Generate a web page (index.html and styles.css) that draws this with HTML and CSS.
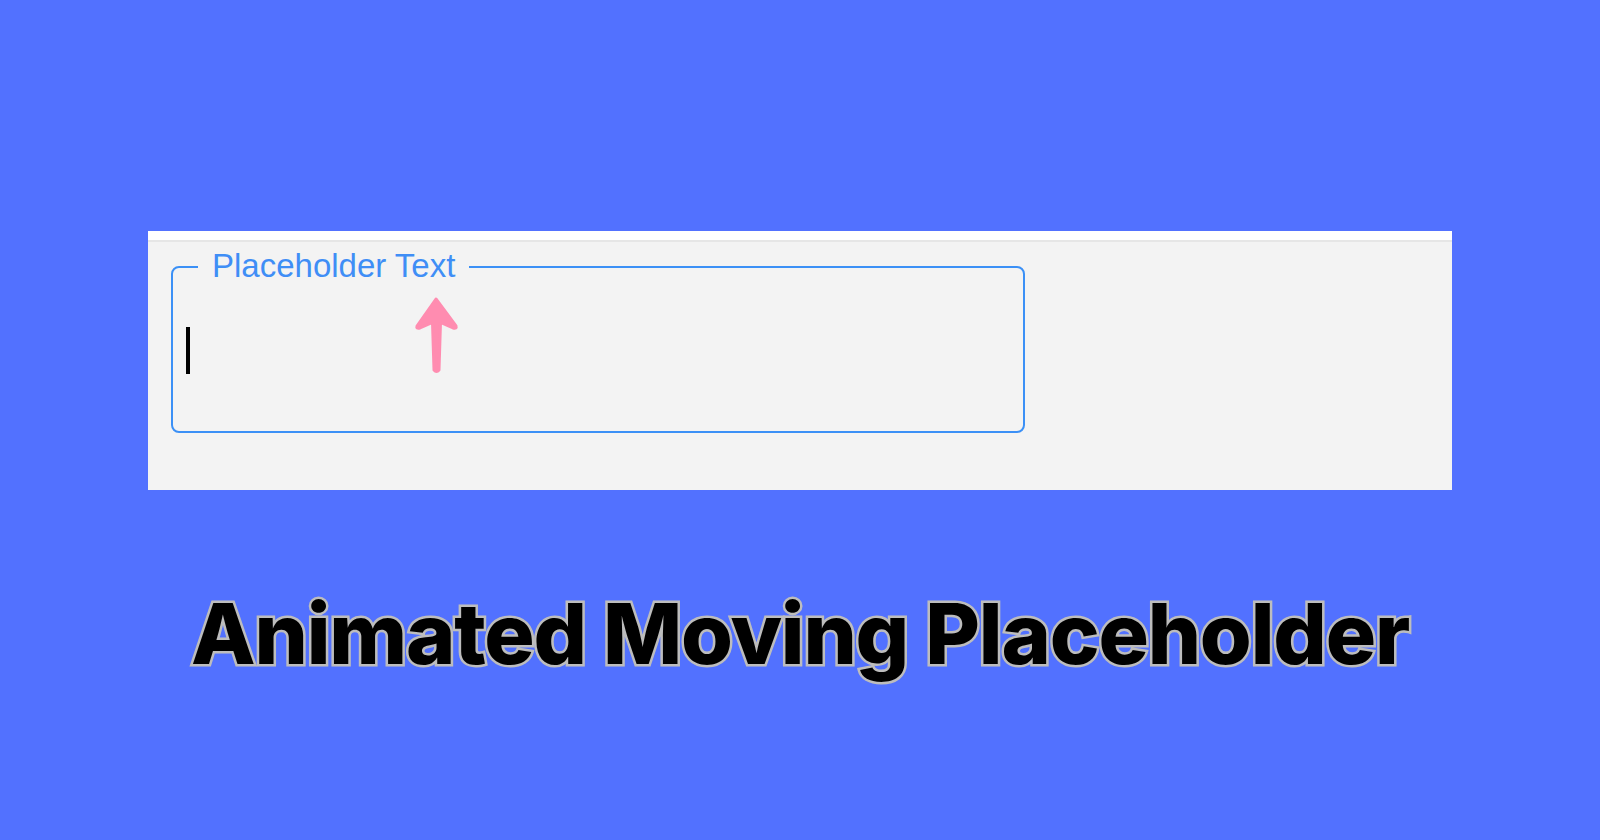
FILE: index.html
```html
<!DOCTYPE html>
<html lang="en">
<head>
<meta charset="utf-8">
<title>Animated Moving Placeholder</title>
<link rel="stylesheet" href="styles.css">
</head>
<body>
<main class="page">
  <section class="panel">
    <div class="panel-body">
      <div class="field">
        <span class="field-label">Placeholder Text</span>
        <span class="caret"></span>
        <svg class="arrow" width="46" height="80" viewBox="0 0 46 80" aria-hidden="true">
          <path d="M22 3 L3 30 Q2 33 6 32 L18.5 26.5 L20 74 Q22.5 77 25 74 L26.5 26.5 L39 32 Q43 33 42 30 Z" fill="#ff8cb0" stroke="#ff8cb0" stroke-width="3" stroke-linejoin="round" stroke-linecap="round"/>
        </svg>
      </div>
    </div>
  </section>
  <h1 class="title">Animated Moving Placeholder</h1>
</main>
</body>
</html>
```

FILE: styles.css
```css
html, body {
  margin: 0;
  padding: 0;
}
body {
  background: #5271ff;
  width: 1600px;
  height: 840px;
  overflow: hidden;
  font-family: "Liberation Sans", Arial, sans-serif;
}
.page {
  padding-top: 231px;
  display: flex;
  flex-direction: column;
  align-items: center;
}
.panel {
  width: 1304px;
  height: 259px;
  background: #f3f3f3;
  border-top: 9px solid #ffffff;
  box-sizing: border-box;
}
.panel-body {
  border-top: 2px solid #e6e6e6;
  padding: 24px 0 0 23px;
}
.field {
  position: relative;
  width: 854px;
  height: 167px;
  box-sizing: border-box;
  border: 2px solid #3b90f6;
  border-radius: 8px;
  padding: 59px 0 0 13px;
}
.field-label {
  position: absolute;
  left: 25px;
  top: -21px;
  padding: 0 14px;
  background: #f3f3f3;
  color: #3f8ef6;
  font-size: 33px;
  line-height: 38px;
}
.caret {
  display: block;
  width: 4px;
  height: 47px;
  background: #000;
}
.arrow {
  position: absolute;
  left: 241px;
  top: 28px;
}
.title {
  margin: 94px 0 0;
  font-family: Inter, "Noto Sans", sans-serif;
  font-weight: 800;
  font-size: 84px;
  line-height: 100px;
  color: #000;
  -webkit-text-stroke: 5px #bdbdbd;
  paint-order: stroke fill;
  letter-spacing: -1.2px;
}
```
